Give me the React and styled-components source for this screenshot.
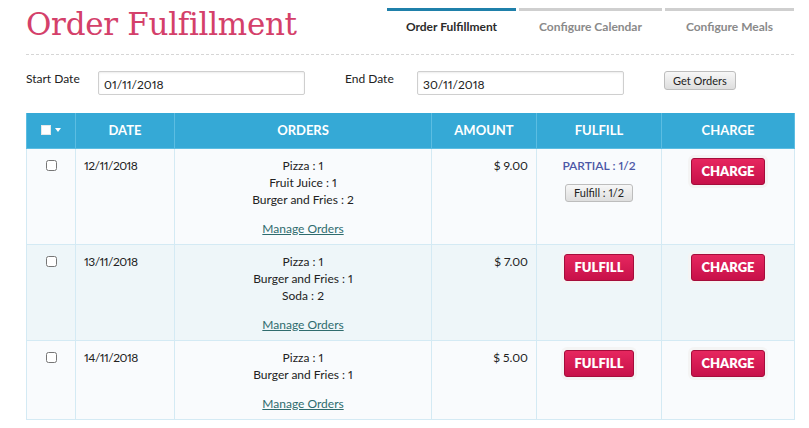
import React from "react";
import styled, { createGlobalStyle } from "styled-components";

const Global = createGlobalStyle`
  html, body { margin: 0; padding: 0; background: #fff; }
  body {
    font-family: Lato, "Open Sans", "Liberation Sans", sans-serif;
    color: #222;
    font-variant-numeric: proportional-nums;
    font-feature-settings: "pnum" 1;
  }
  * { box-sizing: border-box; }
  input, button { font-variant-numeric: proportional-nums; font-feature-settings: "pnum" 1; }
`;

const Page = styled.div`
  padding: 0 15px 0 26px;
  width: 809px;
`;

const Header = styled.div`
  display: flex;
  justify-content: space-between;
  align-items: flex-start;
  border-bottom: 1px dashed #d6d6d6;
  height: 55px;
`;

const Title = styled.h1`
  margin: 0;
  padding-top: 4px;
  font-family: "DejaVu Serif", "Liberation Serif", serif;
  font-weight: 400;
  font-size: 31px;
  letter-spacing: -0.3px;
  color: #d4406a;
  line-height: 40px;
`;

const Tabs = styled.div`
  display: flex;
  gap: 3px;
  margin-top: 8px;
`;

const Tab = styled.div`
  width: ${(p) => p.w}px;
  border-top: 3px solid ${(p) => (p.active ? "#1f80aa" : "#cfcfcf")};
  text-align: center;
  font-size: 12px;
  font-weight: 700;
  color: ${(p) => (p.active ? "#2b2b2b" : "#8a8a8a")};
  padding-top: 8px;
  line-height: 16px;
`;

const Filters = styled.div`
  display: flex;
  align-items: flex-start;
  padding-top: 16px;
  height: 58px;
`;

const Label = styled.label`
  font-size: 12px;
  color: #222;
  line-height: 16px;
  width: ${(p) => p.w}px;
`;

const Input = styled.input`
  width: 207px;
  height: 24px;
  border: 1px solid #cfcfcf;
  border-radius: 2px;
  box-shadow: inset 0 1px 2px rgba(0, 0, 0, 0.08);
  font-family: inherit;
  font-size: 12px;
  color: #222;
  padding: 4px 5px 2px;
  margin-right: ${(p) => p.mr}px;
`;

const SmallButton = styled.button`
  font-family: inherit;
  font-size: 11px;
  color: #222;
  background: linear-gradient(#f7f7f7, #dedede);
  border: 1px solid #bdbdbd;
  border-radius: 3px;
  padding: 0 8px;
  height: ${(p) => p.h || 18}px;
  line-height: 16px;
  cursor: pointer;
`;

const Table = styled.table`
  width: 768px;
  border-collapse: collapse;
  table-layout: fixed;
  font-size: 12px;
`;

const Th = styled.th`
  background: #35a9d6;
  color: #fff;
  font-weight: 700;
  font-size: 13px;
  height: 35px;
  border: 1px solid #5cbde2;
  border-top: none;
  text-align: center;
  padding: 0;
`;

const Tr = styled.tr`
  background: ${(p) => (p.alt ? "#eef6f9" : "#f9fbfd")};
`;

const Td = styled.td`
  border: 1px solid #d4eaf4;
  vertical-align: top;
  padding: 8px 8px 7px 8px;
  line-height: 17px;
  text-align: ${(p) => p.align || "left"};
`;

const DateText = styled.span`
  letter-spacing: -0.5px;
`;

const HeadCheck = styled.span`
  display: inline-flex;
  align-items: center;
  gap: 4px;
`;

const WhiteBox = styled.span`
  display: inline-block;
  width: 10px;
  height: 10px;
  background: #fff;
  border: 1px solid #e8e8e8;
`;

const Caret = styled.span`
  width: 0;
  height: 0;
  border-left: 3.5px solid transparent;
  border-right: 3.5px solid transparent;
  border-top: 4px solid #fff;
`;

const RowCheck = styled.input.attrs({ type: "checkbox" })`
  margin: 3px 0 0 0;
  width: 11px;
  height: 11px;
`;

const Orders = styled.div`
  text-align: center;
`;

const Manage = styled.a`
  display: block;
  margin-top: 12px;
  color: #2f6c6e;
  text-decoration: underline;
  text-align: center;
  cursor: pointer;
`;

const Partial = styled.div`
  color: #4b57a6;
  font-weight: 600;
  text-align: center;
  margin-bottom: 10px;
`;

const Action = styled.button`
  font-family: inherit;
  font-size: 13px;
  font-weight: 800;
  color: #fff;
  background: linear-gradient(#e6275f, #c71049);
  border: 1px solid #a50d3b;
  border-radius: 3px;
  height: 27px;
  width: ${(p) => p.w}px;
  box-shadow: 0 0 0 3px #f4f4f4;
  margin-top: 1px;
  cursor: pointer;
`;

const Center = styled.div`
  display: flex;
  flex-direction: column;
  align-items: center;
`;

const rows = [
  {
    date: "12/11/2018",
    orders: ["Pizza : 1", "Fruit Juice : 1", "Burger and Fries : 2"],
    amount: "$ 9.00",
    partial: true,
  },
  {
    date: "13/11/2018",
    orders: ["Pizza : 1", "Burger and Fries : 1", "Soda : 2"],
    amount: "$ 7.00",
  },
  {
    date: "14/11/2018",
    orders: ["Pizza : 1", "Burger and Fries : 1"],
    amount: "$ 5.00",
  },
];

export default function App() {
  return (
    <Page>
      <Global />
      <Header>
        <Title>Order Fulfillment</Title>
        <Tabs>
          <Tab active w={129}>Order Fulfillment</Tab>
          <Tab w={143}>Configure Calendar</Tab>
          <Tab w={129}>Configure Meals</Tab>
        </Tabs>
      </Header>
      <Filters>
        <Label w={72}>Start Date</Label>
        <Input defaultValue="01/11/2018" mr={40} />
        <Label w={72}>End Date</Label>
        <Input defaultValue="30/11/2018" mr={40} />
        <SmallButton h={19}>Get Orders</SmallButton>
      </Filters>
      <Table>
        <colgroup>
          <col style={{ width: 49 }} />
          <col style={{ width: 99 }} />
          <col style={{ width: 257 }} />
          <col style={{ width: 105 }} />
          <col style={{ width: 125 }} />
          <col style={{ width: 133 }} />
        </colgroup>
        <thead>
          <tr>
            <Th>
              <HeadCheck>
                <WhiteBox />
                <Caret />
              </HeadCheck>
            </Th>
            <Th>DATE</Th>
            <Th>ORDERS</Th>
            <Th>AMOUNT</Th>
            <Th>FULFILL</Th>
            <Th>CHARGE</Th>
          </tr>
        </thead>
        <tbody>
          {rows.map((r, i) => (
            <Tr key={r.date} alt={i === 1}>
              <Td align="center">
                <RowCheck />
              </Td>
              <Td>
                <DateText>{r.date}</DateText>
              </Td>
              <Td>
                <Orders>
                  {r.orders.map((o) => (
                    <div key={o}>{o}</div>
                  ))}
                </Orders>
                <Manage>Manage Orders</Manage>
              </Td>
              <Td align="right">{r.amount}</Td>
              <Td>
                <Center>
                  {r.partial ? (
                    <>
                      <Partial>PARTIAL : 1/2</Partial>
                      <SmallButton h={18}>Fulfill : 1/2</SmallButton>
                    </>
                  ) : (
                    <Action w={70}>FULFILL</Action>
                  )}
                </Center>
              </Td>
              <Td>
                <Center>
                  <Action w={74}>CHARGE</Action>
                </Center>
              </Td>
            </Tr>
          ))}
        </tbody>
      </Table>
    </Page>
  );
}
